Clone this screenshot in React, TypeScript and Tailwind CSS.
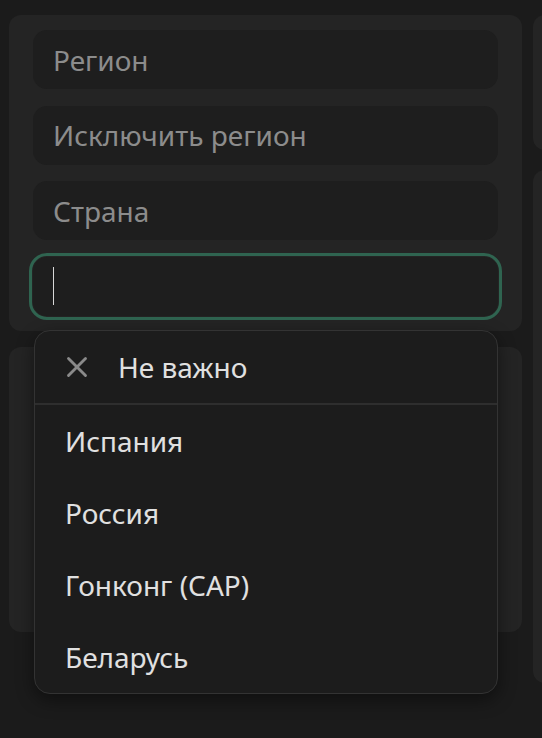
import { X } from "lucide-react";

const countries = ["Испания", "Россия", "Гонконг (САР)", "Беларусь"];

function Field({ label }: { label: string }) {
  return (
    <div className="h-[59px] rounded-[14px] bg-[#1e1e1e] flex items-center pl-[20px] text-[28px] text-[#8c8c8c]">
      {label}
    </div>
  );
}

export default function App() {
  return (
    <div
      className="w-[542px] h-[738px] overflow-hidden bg-[#1b1b1b]"
      style={{ fontFamily: '"Noto Sans", "Open Sans", sans-serif' }}
    >
      <div className="flex gap-x-[11px] pl-[9px] pt-[15px]">
        {/* left column */}
        <div className="w-[513px] shrink-0 flex flex-col gap-[16px]">
          <div className="h-[316px] rounded-[12px] bg-[#242424] px-[24px] pt-[15px] flex flex-col gap-[16.5px]">
            <Field label="Регион" />
            <Field label="Исключить регион" />
            <Field label="Страна" />

            <div className="relative">
              <div className="h-[59px] rounded-[14px] bg-[#1e1e1e] outline-[3px] outline-solid outline-[#2f6450] outline-offset-[1px] flex items-center pl-[20px]">
                <div className="w-px h-[38px] bg-[#d8d8d8]" />
              </div>

              {/* dropdown */}
              <div className="absolute left-[1px] right-0 top-[73px] z-10 rounded-[16px] border border-[#333333] bg-[#1c1c1c] shadow-[0_6px_18px_rgba(0,0,0,0.45)] overflow-hidden">
                <div className="h-[74px] flex items-center border-b-2 border-[#2e2e2e] pl-[25px]">
                  <X className="size-[34px] text-[#8a8a8a]" strokeWidth={2} />
                  <span className="ml-[24px] text-[28px] text-[#e0e0e0]">Не важно</span>
                </div>
                {countries.map((c) => (
                  <div key={c} className="h-[72px] flex items-center pl-[30px] text-[28px] text-[#e0e0e0]">
                    {c}
                  </div>
                ))}
              </div>
            </div>
          </div>

          <div className="h-[285px] rounded-[12px] bg-[#242424]" />
        </div>

        {/* right column */}
        <div className="w-[300px] shrink-0 flex flex-col gap-[20px]">
          <div className="h-[135px] rounded-[12px] bg-[#242424]" />
          <div className="h-[513px] rounded-[12px] bg-[#242424]" />
        </div>
      </div>
    </div>
  );
}
